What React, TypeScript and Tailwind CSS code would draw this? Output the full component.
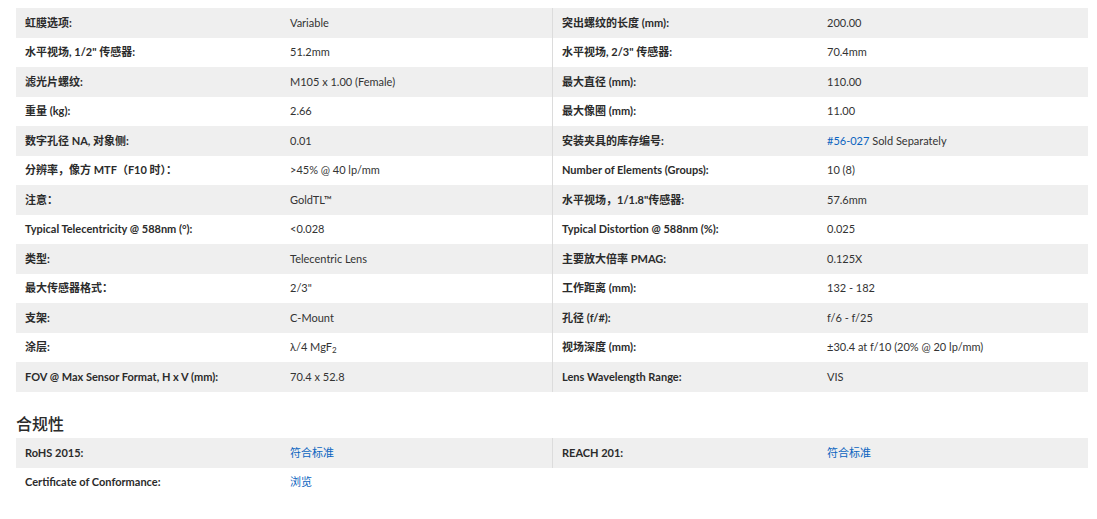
import React from "react";

type Cell = { label: string; value: React.ReactNode };

const rows: [Cell, Cell | null][] = [
  [{ label: "虹膜选项:", value: "Variable" }, { label: "突出螺纹的长度 (mm):", value: "200.00" }],
  [{ label: "水平视场, 1/2\" 传感器:", value: "51.2mm" }, { label: "水平视场, 2/3\" 传感器:", value: "70.4mm" }],
  [{ label: "滤光片螺纹:", value: "M105 x 1.00 (Female)" }, { label: "最大直径 (mm):", value: "110.00" }],
  [{ label: "重量 (kg):", value: "2.66" }, { label: "最大像圈 (mm):", value: "11.00" }],
  [
    { label: "数字孔径 NA, 对象侧:", value: "0.01" },
    {
      label: "安装夹具的库存编号:",
      value: (
        <span>
          <span className="text-[#0b64c0]">#56-027</span> Sold Separately
        </span>
      ),
    },
  ],
  [{ label: "分辨率，像方 MTF（F10 时）：", value: ">45% @ 40 lp/mm" }, { label: "Number of Elements (Groups):", value: "10 (8)" }],
  [{ label: "注意：", value: "GoldTL™" }, { label: "水平视场，1/1.8\"传感器:", value: "57.6mm" }],
  [{ label: "Typical Telecentricity @ 588nm (°):", value: "<0.028" }, { label: "Typical Distortion @ 588nm (%):", value: "0.025" }],
  [{ label: "类型:", value: "Telecentric Lens" }, { label: "主要放大倍率 PMAG:", value: "0.125X" }],
  [{ label: "最大传感器格式：", value: "2/3\"" }, { label: "工作距离 (mm):", value: "132 - 182" }],
  [{ label: "支架:", value: "C-Mount" }, { label: "孔径 (f/#):", value: "f/6 - f/25" }],
  [
    {
      label: "涂层:",
      value: (
        <span>
          λ/4 MgF<sub className="relative top-[2px] align-baseline text-[8px]">2</sub>
        </span>
      ),
    },
    { label: "视场深度 (mm):", value: "±30.4 at f/10 (20% @ 20 lp/mm)" },
  ],
  [{ label: "FOV @ Max Sensor Format, H x V (mm):", value: "70.4 x 52.8" }, { label: "Lens Wavelength Range:", value: "VIS" }],
];

const compliance: [Cell, Cell | null][] = [
  [
    { label: "RoHS 2015:", value: <span className="text-[#0b64c0]">符合标准</span> },
    { label: "REACH 201:", value: <span className="text-[#0b64c0]">符合标准</span> },
  ],
  [{ label: "Certificate of Conformance:", value: <span className="text-[#0b64c0]">浏览</span> }, null],
];

function Row({ left, right, gray }: { left: Cell; right: Cell | null; gray: boolean }) {
  return (
    <div className={`flex h-[29.5px] items-stretch ${gray ? "bg-[#efefef]" : "bg-white"}`}>
      <div className="flex w-[274px] items-center pl-[9px] font-bold text-[#2b2b2b]">{left.label}</div>
      <div className="flex w-[262px] items-center text-[#333333]">{left.value}</div>
      {right && (
        <>
          <div className="flex w-[275px] items-center border-l border-[#dcdcdc] pl-[9px] font-bold text-[#2b2b2b]">
            {right.label}
          </div>
          <div className="flex w-[261px] items-center text-[#333333]">{right.value}</div>
        </>
      )}
    </div>
  );
}

export default function App() {
  return (
    <div
      className="min-h-[519px] w-[1097px] bg-white pl-[16px] pt-[8px] text-[11px] leading-[14px]"
      style={{ fontFamily: 'Lato, "Noto Sans CJK SC", sans-serif' }}
    >
      <div className="w-[1072px]">
        {rows.map(([l, r], i) => (
          <Row key={i} left={l} right={r} gray={i % 2 === 0} />
        ))}
      </div>
      <h2 className="mt-[21px] mb-[3.5px] h-[22px] text-[16px] leading-[22px] font-medium text-[#2b2b2b]">合规性</h2>
      <div className="w-[1072px]">
        {compliance.map(([l, r], i) => (
          <Row key={i} left={l} right={r} gray={i % 2 === 0} />
        ))}
      </div>
    </div>
  );
}
